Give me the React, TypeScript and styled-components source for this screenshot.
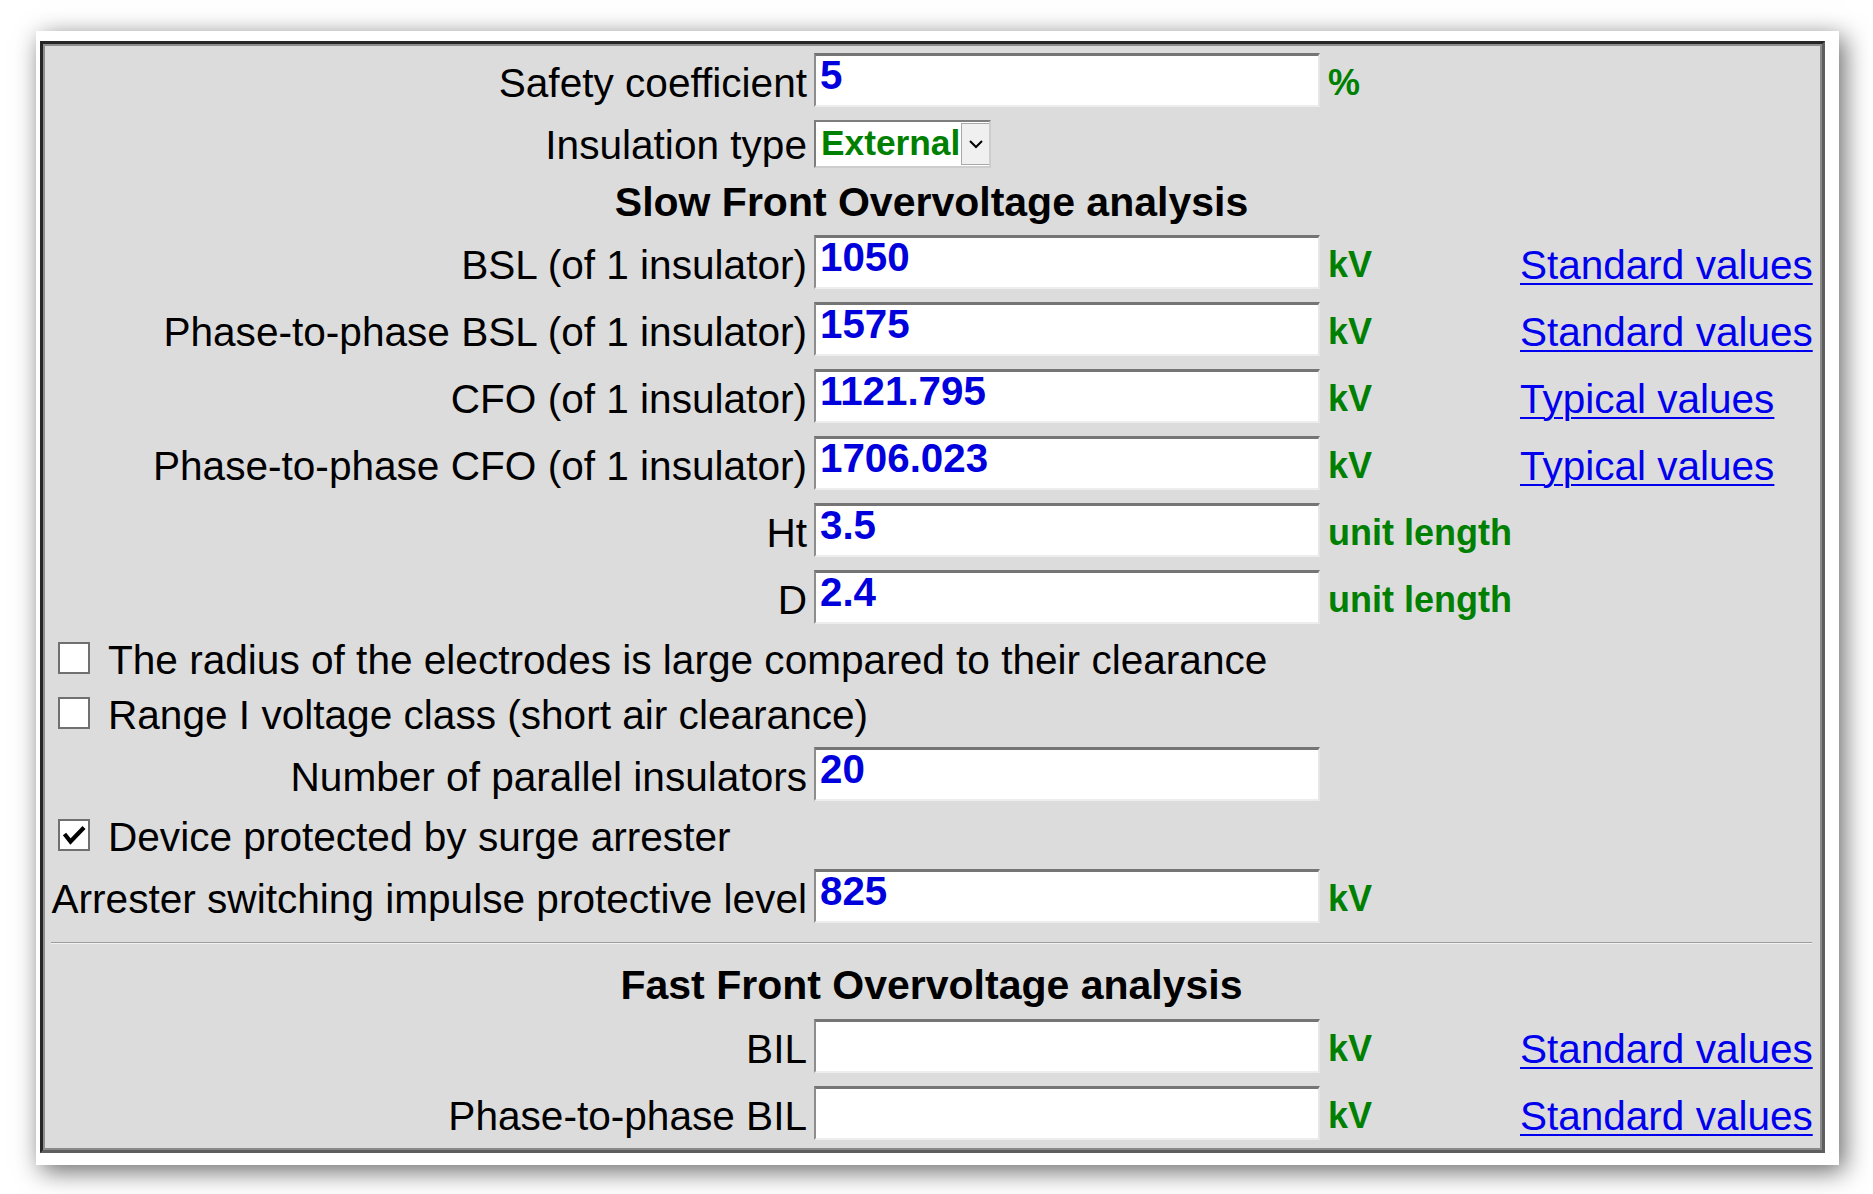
import React from "react";
import styled, { createGlobalStyle } from "styled-components";

const GlobalStyle = createGlobalStyle`
  html, body {
    margin: 0;
    padding: 0;
    background: #ffffff;
  }
  body {
    font-family: "Liberation Sans", Arial, sans-serif;
    width: 1873px;
    height: 1194px;
    overflow: hidden;
  }
`;

const FONT = `"Liberation Sans", Arial, sans-serif`;
const COLS = `756px 507px 185px 292px`;

const Page = styled.div`
  padding: 31px 0 0 36px;
`;

const Frame = styled.div`
  box-sizing: border-box;
  width: 1803px;
  height: 1134px;
  background: #ffffff;
  padding: 10px 14px 12px 4px;
  box-shadow: 5px 6px 24px rgba(0, 0, 0, 0.6);
`;

const Panel = styled.form`
  box-sizing: border-box;
  width: 1785px;
  height: 1112px;
  margin: 0;
  background: #dcdcdc;
  border: 3px solid;
  border-color: #262626 #5e5e5e #5e5e5e #262626;
  box-shadow: inset 2px 2px 0 #8e8e8e, inset -2px -2px 0 #8a8a8a;
  padding: 9px 0 0 8px;
`;

const Rows = styled.div`
  display: flex;
  flex-direction: column;
  gap: 13px;
`;

const FieldRow = styled.div<{ $h: number }>`
  display: grid;
  grid-template-columns: ${COLS};
  column-gap: 7px;
  height: ${(p) => p.$h}px;
  align-items: end;
`;

const Label = styled.label<{ $pb?: number }>`
  font-family: ${FONT};
  font-size: 40.6px;
  line-height: 46px;
  color: #000;
  text-align: right;
  white-space: nowrap;
  padding-bottom: ${(p) => p.$pb ?? 1}px;
`;

const ValueInput = styled.input`
  box-sizing: border-box;
  width: 506px;
  height: 54px;
  margin: 0;
  padding: 0 6px 9px 4px;
  border-style: solid;
  border-width: 3px 2px 2px 2px;
  border-color: #757575 #e6e6e6 #ededed #8d8d8d;
  background: #ffffff;
  font-family: ${FONT};
  font-weight: bold;
  font-size: 40.3px;
  color: #0000dd;
  outline: none;
`;

const Unit = styled.span`
  font-family: ${FONT};
  font-weight: bold;
  font-size: 36px;
  line-height: 41px;
  color: #008000;
  white-space: nowrap;
  padding-bottom: 4px;
`;

const ValueLink = styled.a`
  justify-self: start;
  font-family: ${FONT};
  font-size: 40.5px;
  line-height: 46px;
  color: #0000ee;
  text-decoration: underline;
  text-decoration-thickness: 2px;
  text-underline-offset: 4px;
  white-space: nowrap;
  padding-bottom: 1px;
  cursor: pointer;
`;

const Select = styled.div`
  box-sizing: border-box;
  width: 177px;
  height: 48px;
  display: flex;
  background: #ffffff;
  border-style: solid;
  border-width: 2px;
  border-color: #7d7d7d #cdcdcd #cdcdcd #7d7d7d;
`;

const SelectText = styled.span`
  flex: 1;
  padding: 1px 0 0 5px;
  font-family: ${FONT};
  font-weight: bold;
  font-size: 35.3px;
  line-height: 40px;
  color: #008000;
  white-space: nowrap;
  overflow: hidden;
`;

const SelectArrow = styled.span`
  box-sizing: border-box;
  flex: 0 0 28px;
  width: 28px;
  margin: 1px 0;
  display: flex;
  align-items: center;
  justify-content: center;
  background: #f0f0f0;
  border: 1px solid #a8a8a8;
  border-right: none;
`;

const Chevron = styled.svg`
  display: block;
  flex-shrink: 0;
  width: 16px;
  height: 10px;
`;

const Heading = styled.div<{ $h: number }>`
  height: ${(p) => p.$h}px;
  width: 1761px;
  display: flex;
  align-items: center;
  justify-content: center;
  font-family: ${FONT};
  font-weight: bold;
  font-size: 41px;
  line-height: 46px;
  color: #000;
  white-space: nowrap;
`;

const RuleRow = styled.div`
  height: 14px;
  display: flex;
  align-items: center;
`;

const Rule = styled.hr`
  width: 1761px;
  margin: 0;
  height: 0;
  border: none;
  border-top: 1px solid #9c9c9c;
  border-bottom: 1px solid #f2f2f2;
`;

const CheckRow = styled.div`
  height: 42px;
  display: flex;
  align-items: baseline;
  gap: 18px;
  padding-left: 7px;
`;

const CheckBox = styled.span`
  box-sizing: border-box;
  flex-shrink: 0;
  width: 32px;
  height: 32px;
  display: block;
  background: #ffffff;
  border: 2px solid #707070;
`;

const CheckMark = styled.svg`
  display: block;
  width: 28px;
  height: 28px;
`;

const CheckText = styled.span`
  font-family: ${FONT};
  font-size: 40.6px;
  line-height: 46px;
  color: #000;
  white-space: nowrap;
`;

type Field = {
  kind: "field";
  label: string;
  value: string;
  unit?: string;
  link?: string;
};
type Item =
  | Field
  | { kind: "select"; label: string; value: string }
  | { kind: "heading"; text: string; h: number }
  | { kind: "check"; text: string; checked: boolean }
  | { kind: "rule" };

const items: Item[] = [
  { kind: "field", label: "Safety coefficient", value: "5", unit: "%" },
  { kind: "select", label: "Insulation type", value: "External" },
  { kind: "heading", text: "Slow Front Overvoltage analysis", h: 41 },
  { kind: "field", label: "BSL (of 1 insulator)", value: "1050", unit: "kV", link: "Standard values" },
  { kind: "field", label: "Phase-to-phase BSL (of 1 insulator)", value: "1575", unit: "kV", link: "Standard values" },
  { kind: "field", label: "CFO (of 1 insulator)", value: "1121.795", unit: "kV", link: "Typical values" },
  { kind: "field", label: "Phase-to-phase CFO (of 1 insulator)", value: "1706.023", unit: "kV", link: "Typical values" },
  { kind: "field", label: "Ht", value: "3.5", unit: "unit length" },
  { kind: "field", label: "D", value: "2.4", unit: "unit length" },
  { kind: "check", text: "The radius of the electrodes is large compared to their clearance", checked: false },
  { kind: "check", text: "Range I voltage class (short air clearance)", checked: false },
  { kind: "field", label: "Number of parallel insulators", value: "20" },
  { kind: "check", text: "Device protected by surge arrester", checked: true },
  { kind: "field", label: "Arrester switching impulse protective level", value: "825", unit: "kV" },
  { kind: "rule" },
  { kind: "heading", text: "Fast Front Overvoltage analysis", h: 43 },
  { kind: "field", label: "BIL", value: "", unit: "kV", link: "Standard values" },
  { kind: "field", label: "Phase-to-phase BIL", value: "", unit: "kV", link: "Standard values" },
];

function renderItem(item: Item, i: number) {
  switch (item.kind) {
    case "field":
      return (
        <FieldRow key={i} $h={54}>
          <Label>{item.label}</Label>
          <ValueInput type="text" readOnly value={item.value} />
          {item.unit ? <Unit>{item.unit}</Unit> : <span />}
          {item.link ? <ValueLink>{item.link}</ValueLink> : <span />}
        </FieldRow>
      );
    case "select":
      return (
        <FieldRow key={i} $h={48}>
          <Label $pb={0}>{item.label}</Label>
          <Select>
            <SelectText>{item.value}</SelectText>
            <SelectArrow>
              <Chevron viewBox="0 0 16 10">
                <path d="M2 2 L8 8 L14 2" fill="none" stroke="#000" strokeWidth="2" />
              </Chevron>
            </SelectArrow>
          </Select>
          <span />
          <span />
        </FieldRow>
      );
    case "heading":
      return (
        <Heading key={i} $h={item.h}>
          {item.text}
        </Heading>
      );
    case "check":
      return (
        <CheckRow key={i}>
          <CheckBox>
            {item.checked && (
              <CheckMark viewBox="0 0 28 28">
                <path d="M4.5 13 L10.5 20.5 L24 6.5" fill="none" stroke="#000" strokeWidth="4.2" strokeLinejoin="miter" />
              </CheckMark>
            )}
          </CheckBox>
          <CheckText>{item.text}</CheckText>
        </CheckRow>
      );
    case "rule":
      return (
        <RuleRow key={i}>
          <Rule />
        </RuleRow>
      );
  }
}

export default function App() {
  return (
    <>
      <GlobalStyle />
      <Page>
        <Frame>
          <Panel onSubmit={(e) => e.preventDefault()}>
            <Rows>{items.map(renderItem)}</Rows>
          </Panel>
        </Frame>
      </Page>
    </>
  );
}
